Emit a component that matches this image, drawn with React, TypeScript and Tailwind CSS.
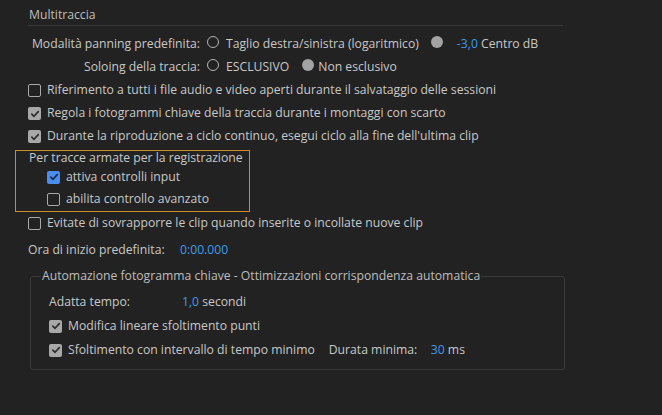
import React from "react"

const font = { fontFamily: '"Open Sans", "Noto Sans", sans-serif' }

function Check({ on, blue }: { on?: boolean; blue?: boolean }) {
  if (!on) {
    return <span className="inline-block w-[13px] h-[13px] shrink-0 rounded-[2px] border-[1.5px] border-[#a9a9a9]" />
  }
  return (
    <span
      className={`inline-flex items-center justify-center w-[13px] h-[13px] shrink-0 rounded-[2px] ${
        blue ? "bg-[#4a8cf0]" : "bg-[#a8a8a8]"
      }`}
    >
      <svg width="10" height="10" viewBox="0 0 10 10" fill="none">
        <path d="M1.8 5.2 L4 7.3 L8.3 2.6" stroke={blue ? "#1b2a48" : "#2b2b2b"} strokeWidth="1.7" strokeLinecap="round" strokeLinejoin="round" />
      </svg>
    </span>
  )
}

function Radio({ on }: { on?: boolean }) {
  return on ? (
    <span className="inline-block w-[12px] h-[12px] shrink-0 rounded-full bg-[#a3a3a3]" />
  ) : (
    <span className="inline-block w-[12px] h-[12px] shrink-0 rounded-full border-[1.5px] border-[#b4b4b4]" />
  )
}

function CheckRow({ on, blue, children, h = "h-[23px]" }: { on?: boolean; blue?: boolean; children: React.ReactNode; h?: string }) {
  return (
    <div className={`flex items-center gap-[6px] ${h}`}>
      <Check on={on} blue={blue} />
      <span>{children}</span>
    </div>
  )
}

export default function App() {
  return (
    <div style={font} className="w-[662px] h-[415px] bg-[#222222] text-[#c8c8c8] text-[12.2px] pl-[28px] pt-[6px] overflow-hidden">
      {/* header */}
      <div className="w-[535px] border-b border-[#3a3a3a]">
        <div className="h-[19px] flex items-center pl-[1px] text-[#bdbdbd]">Multitraccia</div>
      </div>

      <div className="mt-[7px]">
        <div className="flex items-center h-[23px]">
          <span className="w-[172px] text-right whitespace-nowrap">Modalità panning predefinita:</span>
          <span className="ml-[7px]"><Radio /></span>
          <span className="ml-[7px]">Taglio destra/sinistra (logaritmico)</span>
          <span className="ml-[12px]"><Radio on /></span>
          <span className="ml-[14px]"><span className="text-[#3d9be9]">-3,0</span> Centro dB</span>
        </div>
        <div className="flex items-center h-[23px]">
          <span className="w-[172px] text-right">Soloing della traccia:</span>
          <span className="ml-[7px]"><Radio /></span>
          <span className="ml-[7px]">ESCLUSIVO</span>
          <span className="ml-[13px]"><Radio on /></span>
          <span className="ml-[4px]">Non esclusivo</span>
        </div>
        <CheckRow>Riferimento a tutti i file audio e video aperti durante il salvataggio delle sessioni</CheckRow>
        <CheckRow on>Regola i fotogrammi chiave della traccia durante i montaggi con scarto</CheckRow>
        <CheckRow on>Durante la riproduzione a ciclo continuo, esegui ciclo alla fine dell'ultima clip</CheckRow>
      </div>

      {/* highlighted group */}
      <div className="mt-[2px] -ml-[13px] w-[235px] border border-[#d38a2e] pl-[13px] pb-[1px]">
        <div className="h-[15px] flex items-center">Per tracce armate per la registrazione</div>
        <div className="pl-[18px]">
          <CheckRow on blue h="h-[22px]">attiva controlli input</CheckRow>
          <CheckRow h="h-[22px]">abilita controllo avanzato</CheckRow>
        </div>
      </div>

      <CheckRow>Evitate di sovrapporre le clip quando inserite o incollate nuove clip</CheckRow>

      <div className="mt-[4px] flex items-center h-[23px]">
        <span className="w-[152px]">Ora di inizio predefinita:</span>
        <span className="text-[#3d9be9]">0:00.000</span>
      </div>

      <fieldset className="mt-[6px] ml-[2px] w-[535px] border border-[#3a3a3a] rounded-[3px] pl-[10px] pb-[7px]">
        <legend className="h-[16px] leading-[16px] px-[1px] text-[#bdbdbd]">
          Automazione fotogramma chiave - Ottimizzazioni corrispondenza automatica
        </legend>
        <div className="pl-[8px] mt-[6px]">
          <div className="flex items-center h-[24px]">
            <span className="w-[133px]">Adatta tempo:</span>
            <span><span className="text-[#3d9be9]">1,0</span> secondi</span>
          </div>
          <CheckRow on h="h-[24px]">Modifica lineare sfoltimento punti</CheckRow>
          <div className="flex items-center h-[24px]">
            <CheckRow on h="h-[24px]">Sfoltimento con intervallo di tempo minimo</CheckRow>
            <span className="ml-[14px] w-[102px]">Durata minima:</span>
            <span><span className="text-[#3d9be9]">30</span> ms</span>
          </div>
        </div>
      </fieldset>
    </div>
  )
}
